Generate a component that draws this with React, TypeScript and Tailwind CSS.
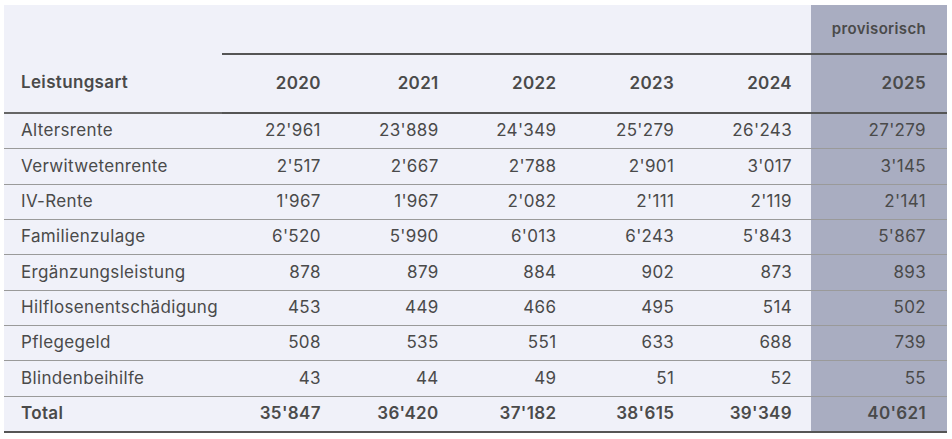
import React from "react";

const rows: [string, string[]][] = [
  ["Altersrente", ["22'961", "23'889", "24'349", "25'279", "26'243", "27'279"]],
  ["Verwitwetenrente", ["2'517", "2'667", "2'788", "2'901", "3'017", "3'145"]],
  ["IV-Rente", ["1'967", "1'967", "2'082", "2'111", "2'119", "2'141"]],
  ["Familienzulage", ["6'520", "5'990", "6'013", "6'243", "5'843", "5'867"]],
  ["Ergänzungsleistung", ["878", "879", "884", "902", "873", "893"]],
  ["Hilflosenentschädigung", ["453", "449", "466", "495", "514", "502"]],
  ["Pflegegeld", ["508", "535", "551", "633", "688", "739"]],
  ["Blindenbeihilfe", ["43", "44", "49", "51", "52", "55"]],
];
const total = ["35'847", "36'420", "37'182", "38'615", "39'349", "40'621"];
const years = ["2020", "2021", "2022", "2023", "2024", "2025"];

const grid = "grid grid-cols-[218px_repeat(5,minmax(0,1fr))_136px]";

export default function App() {
  return (
    <div className="w-[952px] h-[439px] bg-white pt-[5px] pl-[4px] text-[#4a4a4a] font-['Inter',sans-serif] text-[17px] tracking-[0.02em]">
      <div className="w-[943px] bg-[#f0f1f9]">
        {/* header row 1 */}
        <div className={`${grid} h-[48px]`}>
          <div />
          <div className="col-span-5" />
          <div className="bg-[#a9adc1] flex items-end justify-end pr-[21px] pb-[13px] text-[15px] font-semibold">
            provisorisch
          </div>
        </div>
        <div className={`${grid} h-[61px]`}>
          <div className="flex items-center pl-[17px] font-semibold border-b-2 border-[#666]">Leistungsart</div>
          {years.slice(0, 5).map((y) => (
            <div key={y} className="flex items-center justify-end pr-[19px] font-semibold border-t-2 border-b-2 border-[#555]">
              {y}
            </div>
          ))}
          <div className="flex items-center justify-end pr-[21px] font-semibold bg-[#a9adc1] border-t-2 border-b-2 border-[#555]">
            {years[5]}
          </div>
        </div>
        {rows.map(([label, vals]) => (
          <div key={label} className={`${grid} h-[35.33px] border-b border-[#9a9a9a]`}>
            <div className="flex items-center pl-[17px]">{label}</div>
            {vals.slice(0, 5).map((v, i) => (
              <div key={i} className="flex items-center justify-end pr-[19px]">
                {v}
              </div>
            ))}
            <div className="flex items-center justify-end pr-[21px] bg-[#a9adc1]">{vals[5]}</div>
          </div>
        ))}
        <div className={`${grid} h-[36px] border-b-2 border-[#555] font-semibold`}>
          <div className="flex items-center pl-[17px]">Total</div>
          {total.slice(0, 5).map((v, i) => (
            <div key={i} className="flex items-center justify-end pr-[19px]">
              {v}
            </div>
          ))}
          <div className="flex items-center justify-end pr-[21px] bg-[#a9adc1]">{total[5]}</div>
        </div>
      </div>
    </div>
  );
}
